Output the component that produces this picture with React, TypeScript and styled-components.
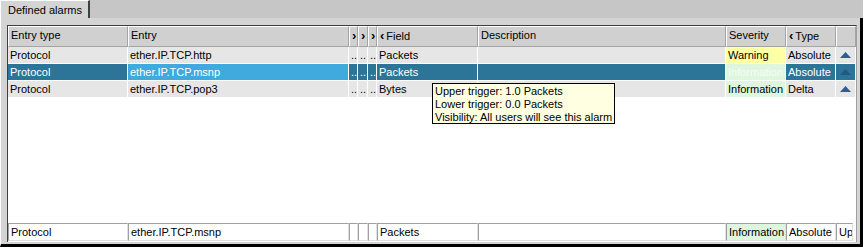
import React from "react";
import styled, { createGlobalStyle, css } from "styled-components";

const Global = createGlobalStyle`
  html, body { margin: 0; padding: 0; }
  body {
    width: 863px; height: 247px; overflow: hidden;
    font-family: "Liberation Sans", Arial, sans-serif;
    font-size: 11px; color: #000; background: #d4d4d4;
  }
`;

const COLS = "120px 221px 9px 10px 9px 101px 248px 60px 50px 20px";

const Window = styled.div`
  position: relative;
  width: 863px;
  height: 247px;
  display: flex;
  flex-direction: column;
  box-sizing: border-box;
`;

const TabStrip = styled.div`
  height: 18px;
  background: #c6c6c6;
  display: flex;
  align-items: flex-end;
  flex: none;
`;

const Tab = styled.div`
  width: 90px;
  height: 18px;
  box-sizing: border-box;
  background: #d4d4d4;
  border-top: 1px solid #ffffff;
  border-left: 1px solid #ffffff;
  border-right: 2px solid #404040;
  padding: 2px 0 0 7px;
  line-height: 14px;
`;

const Panel = styled.div`
  flex: 1;
  min-height: 0;
  background: #d4d4d4;
  border-left: 1px solid #ffffff;
  border-right: 3px solid #000;
  border-bottom: 3px solid #000;
  padding: 7px 3px 2px 6px;
  display: flex;
  box-sizing: border-box;
`;

const Frame = styled.div`
  flex: 1;
  background: #ffffff;
  border-top: 1px solid #404040;
  border-left: 1px solid #404040;
  border-right: 1px solid #a0a0a0;
  display: flex;
  flex-direction: column;
  box-sizing: border-box;
`;

const Row = styled.div<{ $h: number }>`
  display: grid;
  grid-template-columns: ${COLS};
  height: ${(p) => p.$h}px;
  flex: none;
`;

const HeadCell = styled.div`
  box-sizing: border-box;
  background: #d0d0d0;
  border-left: 1px solid #ffffff;
  border-top: 1px solid #ffffff;
  border-right: 1px solid #a4a4a4;
  border-bottom: 1px solid #a4a4a4;
  padding: 0 0 0 2px;
  line-height: 17px;
  white-space: nowrap;
  overflow: hidden;
`;

const Chev = styled.span`
  font-weight: bold;
  font-size: 13px;
  margin-right: 2px;
`;

type Kind = "normal" | "sel" | "focus";
const Cell = styled.div<{ $kind: Kind; $bg?: string; $fg?: string }>`
  box-sizing: border-box;
  border-right: 1px solid #ffffff;
  border-bottom: 1px solid #ffffff;
  padding-left: 2px;
  line-height: 16px;
  white-space: nowrap;
  overflow: hidden;
  background: #e6e6e6;
  color: #000;
  ${(p) =>
    p.$kind === "sel" &&
    css`
      background: #2c7599;
      color: #ffffff;
    `}
  ${(p) =>
    p.$kind === "focus" &&
    css`
      background: #40a9de;
      color: #ffffff;
    `}
  ${(p) => p.$bg && css`background: ${p.$bg};`}
  ${(p) => p.$fg && css`color: ${p.$fg};`}
`;

const ArrowCell = styled(Cell)`
  display: flex;
  align-items: center;
  justify-content: center;
  padding: 0;
`;

const Spacer = styled.div`
  flex: 1;
`;

const EditRow = styled.div`
  display: grid;
  grid-template-columns: 120px 221px 9px 10px 9px 101px 248px 60px 50px 17px;
  height: 18px;
  margin-bottom: 1px;
  flex: none;
`;

const EditCell = styled.div<{ $bg?: string }>`
  box-sizing: border-box;
  background: ${(p) => p.$bg || "#ffffff"};
  border-top: 1px solid #a0a0a0;
  border-left: 1px solid #a0a0a0;
  border-right: 1px solid #e0e0e0;
  border-bottom: 1px solid #e0e0e0;
  padding-left: 2px;
  line-height: 16px;
  white-space: nowrap;
  overflow: hidden;
`;

const Tooltip = styled.div`
  position: absolute;
  left: 432px;
  top: 83px;
  width: 183px;
  height: 41px;
  box-sizing: border-box;
  background: #ffffe1;
  border: 1px solid #000;
  padding: 1px 0 0 2px;
  line-height: 13px;
  white-space: nowrap;
`;

const Up = ({ color }: { color: string }) => (
  <svg width="11" height="6" viewBox="0 0 11 6">
    <path d="M5.5 0 L11 6 L0 6 Z" fill={color} />
  </svg>
);

type RowData = {
  type: string;
  entry: string;
  field: string;
  sev: string;
  kind: string;
};

const rows: RowData[] = [
  { type: "Protocol", entry: "ether.IP.TCP.http", field: "Packets", sev: "Warning", kind: "Absolute" },
  { type: "Protocol", entry: "ether.IP.TCP.msnp", field: "Packets", sev: "Information", kind: "Absolute" },
  { type: "Protocol", entry: "ether.IP.TCP.pop3", field: "Bytes", sev: "Information", kind: "Delta" },
];

export default function App() {
  return (
    <>
      <Global />
      <Window>
        <TabStrip>
          <Tab>Defined alarms</Tab>
        </TabStrip>
        <Panel>
          <Frame>
            <Row $h={21}>
              <HeadCell>Entry type</HeadCell>
              <HeadCell>Entry</HeadCell>
              <HeadCell><Chev>›</Chev></HeadCell>
              <HeadCell><Chev>›</Chev></HeadCell>
              <HeadCell><Chev>›</Chev></HeadCell>
              <HeadCell><Chev>‹</Chev>Field</HeadCell>
              <HeadCell>Description</HeadCell>
              <HeadCell>Severity</HeadCell>
              <HeadCell><Chev>‹</Chev>Type</HeadCell>
              <HeadCell />
            </Row>
            {rows.map((r, i) => {
              const sel = i === 1;
              const k: Kind = sel ? "sel" : "normal";
              const sevBg = r.sev === "Warning" ? "#ffffa6" : "#def5de";
              return (
                <Row $h={17} key={i}>
                  <Cell $kind={k}>{r.type}</Cell>
                  <Cell $kind={sel ? "focus" : "normal"}>{r.entry}</Cell>
                  <Cell $kind={k}>..</Cell>
                  <Cell $kind={k}>..</Cell>
                  <Cell $kind={k}>..</Cell>
                  <Cell $kind={k}>{r.field}</Cell>
                  <Cell $kind={k} />
                  <Cell $kind={k} $bg={sevBg} $fg={sel ? "#f4fff4" : "#000"}>
                    {r.sev}
                  </Cell>
                  <Cell $kind={k}>{r.kind}</Cell>
                  <ArrowCell $kind={k}>
                    <Up color={sel ? "#1f5a85" : "#2b5f93"} />
                  </ArrowCell>
                </Row>
              );
            })}
            <Spacer />
            <EditRow>
              <EditCell>Protocol</EditCell>
              <EditCell>ether.IP.TCP.msnp</EditCell>
              <EditCell />
              <EditCell />
              <EditCell />
              <EditCell>Packets</EditCell>
              <EditCell />
              <EditCell $bg="#def5de">Information</EditCell>
              <EditCell>Absolute</EditCell>
              <EditCell>Upper</EditCell>
            </EditRow>
          </Frame>
        </Panel>
        <Tooltip>
          Upper trigger: 1.0 Packets
          <br />
          Lower trigger: 0.0 Packets
          <br />
          Visibility: All users will see this alarm
        </Tooltip>
      </Window>
    </>
  );
}
